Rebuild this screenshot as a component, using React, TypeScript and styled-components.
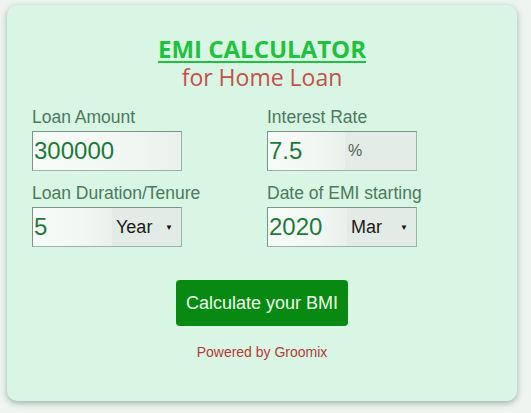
import React from "react";
import styled, { createGlobalStyle } from "styled-components";

const GlobalStyle = createGlobalStyle`
  html, body {
    margin: 0;
    padding: 0;
    background: #eef5f1;
  }
  body {
    font-family: "Liberation Sans", Arial, sans-serif;
  }
`;

const Page = styled.div`
  width: 531px;
  height: 413px;
  padding: 5px 0 0 7px;
  box-sizing: border-box;
  overflow: hidden;
`;

const Card = styled.div`
  width: 510px;
  height: 396px;
  box-sizing: border-box;
  background: #d9f5e3;
  border-radius: 10px;
  box-shadow: 0 2px 6px rgba(80, 120, 100, 0.55);
  padding: 28px 25px 0 25px;
  display: flex;
  flex-direction: column;
`;

const Title = styled.h1`
  margin: 0;
  text-align: center;
  font-family: "Open Sans", sans-serif;
  font-weight: 700;
  font-size: 24px;
  line-height: 32px;
  color: #1fc23e;
  text-decoration: underline;
  text-decoration-thickness: 2px;
  text-underline-offset: 3px;
`;

const Subtitle = styled.h2`
  margin: 0;
  text-align: center;
  font-family: "Open Sans", sans-serif;
  font-weight: 400;
  font-size: 23px;
  line-height: 25px;
  color: #c4524c;
`;

const Grid = styled.div`
  display: grid;
  grid-template-columns: 235px 235px;
  row-gap: 12px;
  margin-top: 17px;
`;

const Field = styled.div`
  display: flex;
  flex-direction: column;
`;

const Label = styled.label`
  font-size: 17.5px;
  line-height: 20px;
  color: #4b7a5e;
  margin-bottom: 4px;
`;

const Combo = styled.div`
  display: flex;
  width: 150px;
  height: 40px;
  box-sizing: border-box;
  border: 1px solid #9db3a5;
  border-top-color: #7f9488;
  border-left-color: #7f9488;
  background: #e5ede8;
`;

const TextInput = styled.input<{ $w: number }>`
  width: ${(p) => p.$w}px;
  height: 100%;
  box-sizing: border-box;
  border: none;
  outline: none;
  padding: 0 0 0 1px;
  margin: 0;
  font-family: "Liberation Sans", Arial, sans-serif;
  font-size: 24px;
  color: #1d7a38;
  background: linear-gradient(90deg, #f6fcf8 0%, #f2f7f4 60%, #e9f1ec 100%);
`;

const Unit = styled.span`
  flex: 1;
  display: flex;
  align-items: center;
  padding-left: 3px;
  font-size: 16px;
  color: #4d6657;
  background: #e4ece7;
`;

const Select = styled.div`
  flex: 1;
  display: flex;
  align-items: center;
  justify-content: space-between;
  padding: 0 8px 0 4px;
  font-size: 18px;
  color: #1a1a1a;
  background: #e3ebe6;
`;

const Arrow = styled.span`
  font-size: 8px;
  color: #111;
`;

const Actions = styled.div`
  display: flex;
  flex-direction: column;
  align-items: center;
  margin-top: 33px;
`;

const CalcButton = styled.button`
  width: 172px;
  height: 46px;
  border: none;
  border-radius: 4px;
  background: #088a12;
  color: #eaffea;
  font-family: "Liberation Sans", Arial, sans-serif;
  font-size: 18px;
  cursor: pointer;
`;

const Powered = styled.p`
  margin: 18px 0 0 0;
  font-size: 14px;
  color: #b23c3a;
`;

export default function App() {
  return (
    <>
      <GlobalStyle />
      <Page>
        <Card>
          <Title>EMI CALCULATOR</Title>
          <Subtitle>for Home Loan</Subtitle>
          <Grid>
            <Field>
              <Label>Loan Amount</Label>
              <Combo>
                <TextInput $w={148} defaultValue="300000" />
              </Combo>
            </Field>
            <Field>
              <Label>Interest Rate</Label>
              <Combo>
                <TextInput $w={77} defaultValue="7.5" />
                <Unit>%</Unit>
              </Combo>
            </Field>
            <Field>
              <Label>Loan Duration/Tenure</Label>
              <Combo>
                <TextInput $w={79} defaultValue="5" />
                <Select>
                  Year <Arrow>▼</Arrow>
                </Select>
              </Combo>
            </Field>
            <Field>
              <Label>Date of EMI starting</Label>
              <Combo>
                <TextInput $w={79} defaultValue="2020" />
                <Select>
                  Mar <Arrow>▼</Arrow>
                </Select>
              </Combo>
            </Field>
          </Grid>
          <Actions>
            <CalcButton>Calculate your BMI</CalcButton>
            <Powered>Powered by Groomix</Powered>
          </Actions>
        </Card>
      </Page>
    </>
  );
}
